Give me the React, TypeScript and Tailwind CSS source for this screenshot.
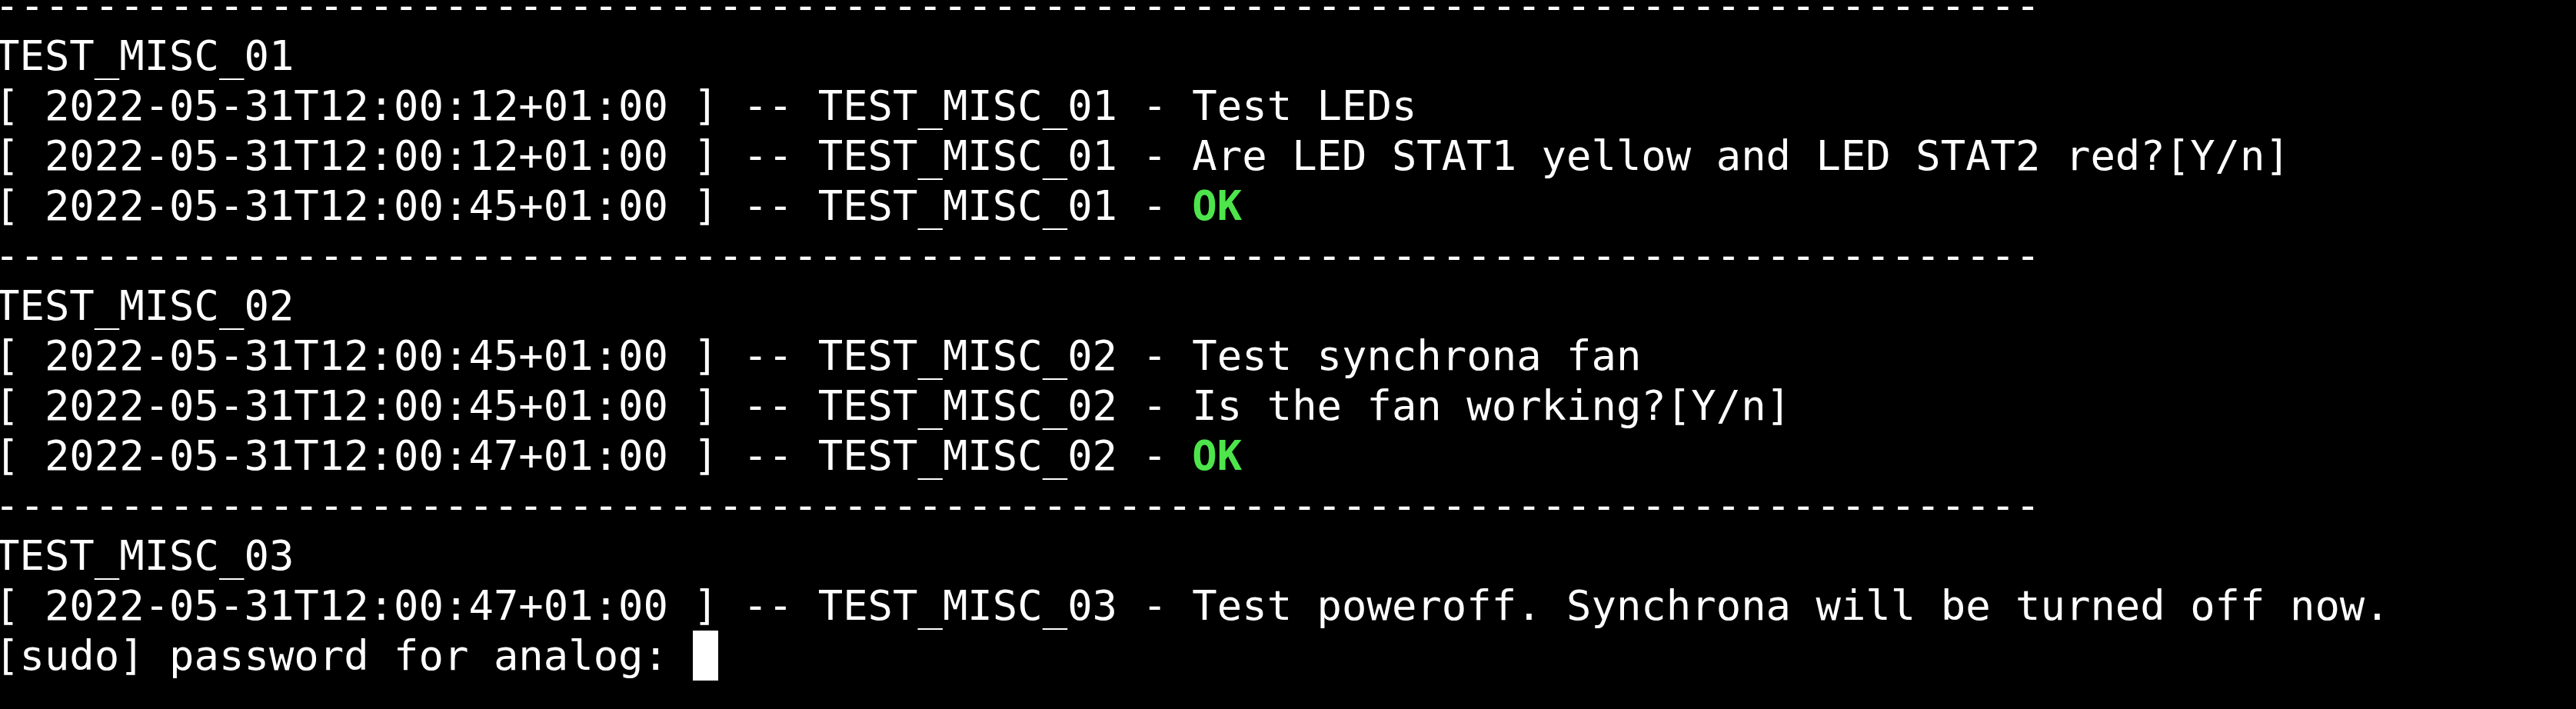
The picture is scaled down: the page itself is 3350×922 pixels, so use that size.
import React from "react";

const DASHES = "-".repeat(82);

type Part = { text: string; ok?: boolean };

const block = (name: string, rows: { ts: string; msg: string; ok?: boolean }[]) => [
  [{ text: DASHES }],
  [{ text: name }],
  ...rows.map((r) => [
    { text: `[ ${r.ts} ] -- ${name} - ` },
    { text: r.msg, ok: r.ok },
  ]),
];

const LINES: Part[][] = [
  ...block("TEST_MISC_01", [
    { ts: "2022-05-31T12:00:12+01:00", msg: "Test LEDs" },
    { ts: "2022-05-31T12:00:12+01:00", msg: "Are LED STAT1 yellow and LED STAT2 red?[Y/n]" },
    { ts: "2022-05-31T12:00:45+01:00", msg: "OK", ok: true },
  ]),
  ...block("TEST_MISC_02", [
    { ts: "2022-05-31T12:00:45+01:00", msg: "Test synchrona fan" },
    { ts: "2022-05-31T12:00:45+01:00", msg: "Is the fan working?[Y/n]" },
    { ts: "2022-05-31T12:00:47+01:00", msg: "OK", ok: true },
  ]),
  ...block("TEST_MISC_03", [
    { ts: "2022-05-31T12:00:47+01:00", msg: "Test poweroff. Synchrona will be turned off now." },
  ]),
];

export default function App() {
  return (
    <div className="h-[922px] w-full overflow-hidden bg-black">
      {/* terminal scrolled: first dashes line is half off the top */}
      <div
        className="-ml-[7px] -mt-[25px] text-[53.9px] leading-[65px] text-white"
        style={{ fontFamily: '"DejaVu Sans Mono", "Liberation Mono", monospace' }}
      >
        {LINES.map((parts, i) => (
          <div key={i} className="whitespace-pre">
            {parts.map((p, j) =>
              p.ok ? (
                <span key={j} className="font-bold text-[#4de54b]">
                  {p.text}
                </span>
              ) : (
                <span key={j}>{p.text}</span>
              )
            )}
          </div>
        ))}
        <div className="whitespace-pre">
          [sudo] password for analog:{" "}
          <span className="inline-block h-[65px] w-[1ch] bg-white align-top" />
        </div>
      </div>
    </div>
  );
}
